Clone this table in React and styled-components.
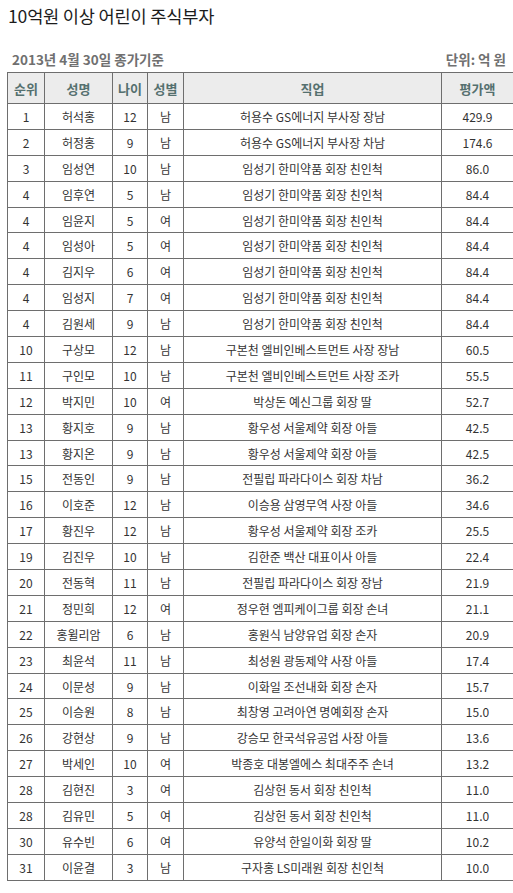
import styled, { createGlobalStyle } from "styled-components";

const GlobalStyle = createGlobalStyle`
  body {
    margin: 0;
    background: #ffffff;
    font-family: "Noto Sans CJK KR", "Noto Sans", sans-serif;
    color: #333333;
  }
`

const Page = styled.div`
  width: 513px;
  box-sizing: border-box;
  padding: 5px 6px 0 7px;
`

const Title = styled.h1`
  margin: 0 0 0 1px;
  font-size: 17.6px;
  line-height: 22px;
  font-weight: 400;
  color: #1c1c1c;
  letter-spacing: -0.2px;
`

const InfoRow = styled.div`
  display: flex;
  justify-content: space-between;
  align-items: center;
  margin-top: 24px;
  padding: 0 1px 0 5px;
  height: 16px;
  font-size: 13.5px;
  font-weight: 700;
  color: #707070;
`

const Table = styled.table`
  margin-top: 5px;
  width: 500px;
  border-collapse: collapse;
  table-layout: fixed;
  font-size: 12px;
`

const HeadCell = styled.th`
  height: 30px;
  padding: 0;
  background: #ececec;
  border: 1px solid #6e6e6e;
  color: #55706f;
  font-weight: 700;
  font-size: 13px;
  text-align: center;
  width: ${(p) => p.$w}px;
`

const Cell = styled.td`
  height: 24.9px;
  padding: 0;
  border: 1px solid #6e6e6e;
  text-align: center;
  color: #333333;
  white-space: nowrap;
`

const columns = [
  { label: "순위", w: 36 },
  { label: "성명", w: 67 },
  { label: "나이", w: 34 },
  { label: "성별", w: 35 },
  { label: "직업", w: 257 },
  { label: "평가액", w: 71 },
];

const rows = [
  ["1", "허석홍", "12", "남", "허용수 GS에너지 부사장 장남", "429.9"],
  ["2", "허정홍", "9", "남", "허용수 GS에너지 부사장 차남", "174.6"],
  ["3", "임성연", "10", "남", "임성기 한미약품 회장 친인척", "86.0"],
  ["4", "임후연", "5", "남", "임성기 한미약품 회장 친인척", "84.4"],
  ["4", "임윤지", "5", "여", "임성기 한미약품 회장 친인척", "84.4"],
  ["4", "임성아", "5", "여", "임성기 한미약품 회장 친인척", "84.4"],
  ["4", "김지우", "6", "여", "임성기 한미약품 회장 친인척", "84.4"],
  ["4", "임성지", "7", "여", "임성기 한미약품 회장 친인척", "84.4"],
  ["4", "김원세", "9", "남", "임성기 한미약품 회장 친인척", "84.4"],
  ["10", "구상모", "12", "남", "구본천 엘비인베스트먼트 사장 장남", "60.5"],
  ["11", "구인모", "10", "남", "구본천 엘비인베스트먼트 사장 조카", "55.5"],
  ["12", "박지민", "10", "여", "박상돈 예신그룹 회장 딸", "52.7"],
  ["13", "황지호", "9", "남", "황우성 서울제약 회장 아들", "42.5"],
  ["13", "황지온", "9", "남", "황우성 서울제약 회장 아들", "42.5"],
  ["15", "전동인", "9", "남", "전필립 파라다이스 회장 차남", "36.2"],
  ["16", "이호준", "12", "남", "이승용 삼영무역 사장 아들", "34.6"],
  ["17", "황진우", "12", "남", "황우성 서울제약 회장 조카", "25.5"],
  ["19", "김진우", "10", "남", "김한준 백산 대표이사 아들", "22.4"],
  ["20", "전동혁", "11", "남", "전필립 파라다이스 회장 장남", "21.9"],
  ["21", "정민희", "12", "여", "정우현 엠피케이그룹 회장 손녀", "21.1"],
  ["22", "홍윌리암", "6", "남", "홍원식 남양유업 회장 손자", "20.9"],
  ["23", "최윤석", "11", "남", "최성원 광동제약 사장 아들", "17.4"],
  ["24", "이문성", "9", "남", "이화일 조선내화 회장 손자", "15.7"],
  ["25", "이승원", "8", "남", "최창영 고려아연 명예회장 손자", "15.0"],
  ["26", "강현상", "9", "남", "강승모 한국석유공업 사장 아들", "13.6"],
  ["27", "박세인", "10", "여", "박종호 대봉엘에스 최대주주 손녀", "13.2"],
  ["28", "김현진", "3", "여", "김상헌 동서 회장 친인척", "11.0"],
  ["28", "김유민", "5", "여", "김상헌 동서 회장 친인척", "11.0"],
  ["30", "유수빈", "6", "여", "유양석 한일이화 회장 딸", "10.2"],
  ["31", "이윤결", "3", "남", "구자홍 LS미래원 회장 친인척", "10.0"],
];

function App() {
  return (
    <>
      <GlobalStyle />
      <Page>
        <Title>10억원 이상 어린이 주식부자</Title>
        <InfoRow>
          <span>2013년 4월 30일 종가기준</span>
          <span>단위: 억 원</span>
        </InfoRow>
        <Table>
          <thead>
            <tr>
              {columns.map((c) => (
                <HeadCell key={c.label} $w={c.w}>{c.label}</HeadCell>
              ))}
            </tr>
          </thead>
          <tbody>
            {rows.map((r, i) => (
              <tr key={i}>
                {r.map((v, j) => (
                  <Cell key={j}>{v}</Cell>
                ))}
              </tr>
            ))}
          </tbody>
        </Table>
      </Page>
    </>
  );
}

export default App;
